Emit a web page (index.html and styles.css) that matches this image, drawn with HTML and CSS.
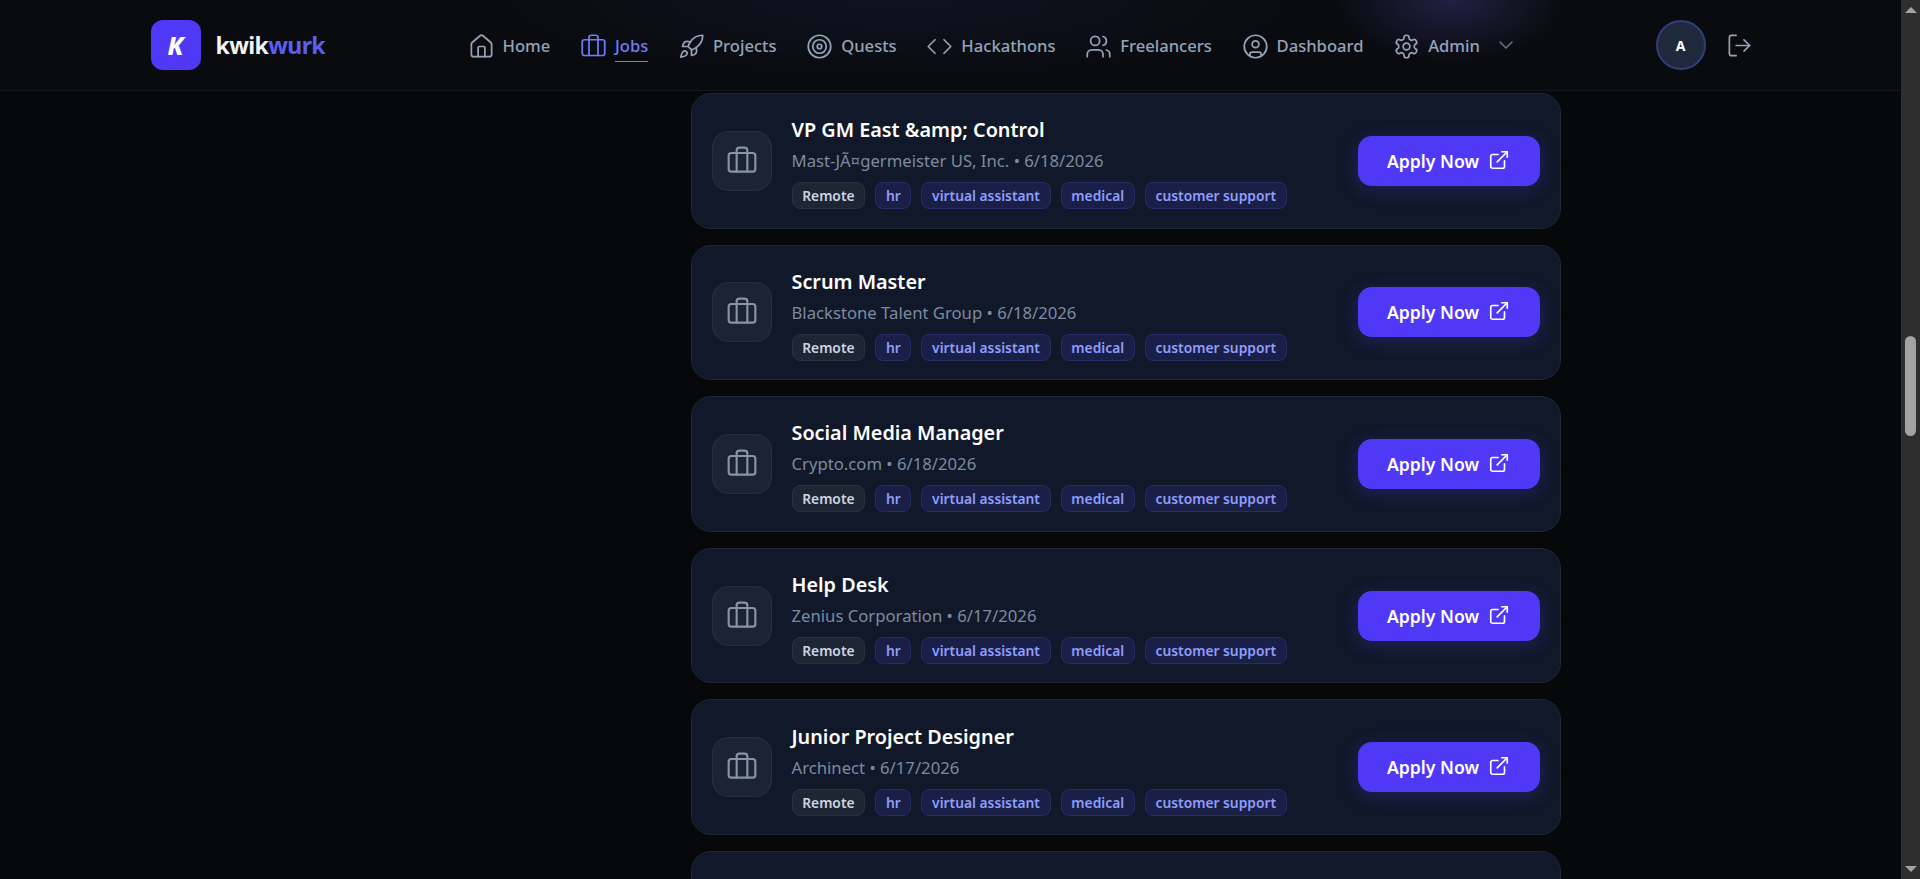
FILE: index.html
```html
<!DOCTYPE html>
<html lang="en">
<head>
    <meta charset="UTF-8">
    <title>kwikwurk - Jobs</title>
    <link rel="stylesheet" href="styles.css">
</head>
<body>
    <svg class="icon-defs" xmlns="http://www.w3.org/2000/svg">
        <symbol id="i-home" viewBox="0 0 24 24"><path d="M15 21v-8a1 1 0 0 0-1-1h-4a1 1 0 0 0-1 1v8"/><path d="M3 10a2 2 0 0 1 .709-1.528l7-5.999a2 2 0 0 1 2.582 0l7 5.999A2 2 0 0 1 21 10v9a2 2 0 0 1-2 2H5a2 2 0 0 1-2-2z"/></symbol>
        <symbol id="i-briefcase" viewBox="0 0 24 24"><path d="M16 20V4a2 2 0 0 0-2-2h-4a2 2 0 0 0-2 2v16"/><rect width="20" height="14" x="2" y="6" rx="2"/></symbol>
        <symbol id="i-rocket" viewBox="0 0 24 24"><path d="M4.5 16.5c-1.5 1.26-2 5-2 5s3.74-.5 5-2c.71-.84.7-2.13-.09-2.91a2.18 2.18 0 0 0-2.91-.09z"/><path d="m12 15-3-3a22 22 0 0 1 2-3.95A12.88 12.88 0 0 1 22 2c0 2.72-.78 7.5-6 11a22.35 22.35 0 0 1-4 2z"/><path d="M9 12H4s.55-3.03 2-4c1.62-1.08 5 0 5 0"/><path d="M12 15v5s3.03-.55 4-2c1.08-1.62 0-5 0-5"/></symbol>
        <symbol id="i-target" viewBox="0 0 24 24"><circle cx="12" cy="12" r="10"/><circle cx="12" cy="12" r="6"/><circle cx="12" cy="12" r="2"/></symbol>
        <symbol id="i-code" viewBox="0 0 24 24"><polyline points="16 18 22 12 16 6"/><polyline points="8 6 2 12 8 18"/></symbol>
        <symbol id="i-users" viewBox="0 0 24 24"><path d="M16 21v-2a4 4 0 0 0-4-4H6a4 4 0 0 0-4 4v2"/><circle cx="9" cy="7" r="4"/><path d="M22 21v-2a4 4 0 0 0-3-3.87"/><path d="M16 3.13a4 4 0 0 1 0 7.75"/></symbol>
        <symbol id="i-user-circle" viewBox="0 0 24 24"><circle cx="12" cy="12" r="10"/><circle cx="12" cy="10" r="3"/><path d="M7 20.662V19a2 2 0 0 1 2-2h6a2 2 0 0 1 2 2v1.662"/></symbol>
        <symbol id="i-settings" viewBox="0 0 24 24"><path d="M12.22 2h-.44a2 2 0 0 0-2 2v.18a2 2 0 0 1-1 1.73l-.43.25a2 2 0 0 1-2 0l-.15-.08a2 2 0 0 0-2.73.73l-.22.38a2 2 0 0 0 .73 2.73l.15.1a2 2 0 0 1 1 1.72v.51a2 2 0 0 1-1 1.74l-.15.09a2 2 0 0 0-.73 2.73l.22.38a2 2 0 0 0 2.73.73l.15-.08a2 2 0 0 1 2 0l.43.25a2 2 0 0 1 1 1.73V20a2 2 0 0 0 2 2h.44a2 2 0 0 0 2-2v-.18a2 2 0 0 1 1-1.73l.43-.25a2 2 0 0 1 2 0l.15.08a2 2 0 0 0 2.73-.73l.22-.39a2 2 0 0 0-.73-2.73l-.15-.08a2 2 0 0 1-1-1.74v-.5a2 2 0 0 1 1-1.74l.15-.09a2 2 0 0 0 .73-2.73l-.22-.38a2 2 0 0 0-2.73-.73l-.15.08a2 2 0 0 1-2 0l-.43-.25a2 2 0 0 1-1-1.73V4a2 2 0 0 0-2-2z"/><circle cx="12" cy="12" r="3"/></symbol>
        <symbol id="i-chevron" viewBox="0 0 24 24"><path d="m6 9 6 6 6-6"/></symbol>
        <symbol id="i-logout" viewBox="0 0 24 24"><path d="M9 21H5a2 2 0 0 1-2-2V5a2 2 0 0 1 2-2h4"/><polyline points="16 17 21 12 16 7"/><line x1="21" y1="12" x2="9" y2="12"/></symbol>
        <symbol id="i-external" viewBox="0 0 24 24"><path d="M15 3h6v6"/><path d="M10 14 21 3"/><path d="M18 13v6a2 2 0 0 1-2 2H5a2 2 0 0 1-2-2V8a2 2 0 0 1 2-2h6"/></symbol>
    </svg>

    <div class="window">
        <div class="page">
            <header class="topbar">
                <div class="topbar-inner">
                    <a class="brand" href="#">
                        <span class="brand-mark">K</span>
                        <span class="brand-name">kwik<span class="brand-accent">wurk</span></span>
                    </a>
                    <nav class="nav">
                        <a class="nav-item" href="#"><svg class="icon"><use href="#i-home"/></svg><span class="nav-label">Home</span></a>
                        <a class="nav-item active" href="#"><svg class="icon"><use href="#i-briefcase"/></svg><span class="nav-label">Jobs</span></a>
                        <a class="nav-item" href="#"><svg class="icon"><use href="#i-rocket"/></svg><span class="nav-label">Projects</span></a>
                        <a class="nav-item" href="#"><svg class="icon"><use href="#i-target"/></svg><span class="nav-label">Quests</span></a>
                        <a class="nav-item" href="#"><svg class="icon"><use href="#i-code"/></svg><span class="nav-label">Hackathons</span></a>
                        <a class="nav-item" href="#"><svg class="icon"><use href="#i-users"/></svg><span class="nav-label">Freelancers</span></a>
                        <a class="nav-item" href="#"><svg class="icon"><use href="#i-user-circle"/></svg><span class="nav-label">Dashboard</span></a>
                        <a class="nav-item" href="#"><svg class="icon"><use href="#i-settings"/></svg><span class="nav-label">Admin</span><svg class="icon-chevron"><use href="#i-chevron"/></svg></a>
                    </nav>
                    <div class="account">
                        <span class="avatar">A</span>
                        <svg class="icon-logout"><use href="#i-logout"/></svg>
                    </div>
                </div>
            </header>

            <main class="feed">
                <article class="job-card">
                    <div class="job-icon"><svg><use href="#i-briefcase"/></svg></div>
                    <div class="job-body">
                        <h3 class="job-title">VP GM East &amp;amp; Control</h3>
                        <p class="job-meta">Mast-JÃ¤germeister US, Inc. • 6/18/2026</p>
                        <div class="tags">
                            <span class="tag tag-plain">Remote</span>
                            <span class="tag">hr</span>
                            <span class="tag">virtual assistant</span>
                            <span class="tag">medical</span>
                            <span class="tag">customer support</span>
                        </div>
                    </div>
                    <a class="btn-apply" href="#">Apply Now <svg><use href="#i-external"/></svg></a>
                </article>

                <article class="job-card">
                    <div class="job-icon"><svg><use href="#i-briefcase"/></svg></div>
                    <div class="job-body">
                        <h3 class="job-title">Scrum Master</h3>
                        <p class="job-meta">Blackstone Talent Group • 6/18/2026</p>
                        <div class="tags">
                            <span class="tag tag-plain">Remote</span>
                            <span class="tag">hr</span>
                            <span class="tag">virtual assistant</span>
                            <span class="tag">medical</span>
                            <span class="tag">customer support</span>
                        </div>
                    </div>
                    <a class="btn-apply" href="#">Apply Now <svg><use href="#i-external"/></svg></a>
                </article>

                <article class="job-card">
                    <div class="job-icon"><svg><use href="#i-briefcase"/></svg></div>
                    <div class="job-body">
                        <h3 class="job-title">Social Media Manager</h3>
                        <p class="job-meta">Crypto.com • 6/18/2026</p>
                        <div class="tags">
                            <span class="tag tag-plain">Remote</span>
                            <span class="tag">hr</span>
                            <span class="tag">virtual assistant</span>
                            <span class="tag">medical</span>
                            <span class="tag">customer support</span>
                        </div>
                    </div>
                    <a class="btn-apply" href="#">Apply Now <svg><use href="#i-external"/></svg></a>
                </article>

                <article class="job-card">
                    <div class="job-icon"><svg><use href="#i-briefcase"/></svg></div>
                    <div class="job-body">
                        <h3 class="job-title">Help Desk</h3>
                        <p class="job-meta">Zenius Corporation • 6/17/2026</p>
                        <div class="tags">
                            <span class="tag tag-plain">Remote</span>
                            <span class="tag">hr</span>
                            <span class="tag">virtual assistant</span>
                            <span class="tag">medical</span>
                            <span class="tag">customer support</span>
                        </div>
                    </div>
                    <a class="btn-apply" href="#">Apply Now <svg><use href="#i-external"/></svg></a>
                </article>

                <article class="job-card">
                    <div class="job-icon"><svg><use href="#i-briefcase"/></svg></div>
                    <div class="job-body">
                        <h3 class="job-title">Junior Project Designer</h3>
                        <p class="job-meta">Archinect • 6/17/2026</p>
                        <div class="tags">
                            <span class="tag tag-plain">Remote</span>
                            <span class="tag">hr</span>
                            <span class="tag">virtual assistant</span>
                            <span class="tag">medical</span>
                            <span class="tag">customer support</span>
                        </div>
                    </div>
                    <a class="btn-apply" href="#">Apply Now <svg><use href="#i-external"/></svg></a>
                </article>

                <article class="job-card"></article>
            </main>
        </div>

        <div class="scrollbar">
            <span class="scroll-arrow scroll-up"></span>
            <div class="scroll-track"><span class="scroll-thumb"></span></div>
            <span class="scroll-arrow scroll-down"></span>
        </div>
    </div>
</body>
</html>
```

FILE: styles.css
```css
* {
    box-sizing: border-box;
}
html, body {
    height: 100%;
    margin: 0;
}
body {
    font-family: "Noto Sans", Arial, sans-serif;
    background-color: #07080a;
    color: #fff;
    overflow: hidden;
}
a {
    color: inherit;
    text-decoration: none;
}
.icon-defs {
    display: none;
}
svg {
    fill: none;
    stroke: currentColor;
    stroke-width: 2;
    stroke-linecap: round;
    stroke-linejoin: round;
}
.window {
    display: flex;
    height: 100vh;
}
.page {
    flex: 1;
    min-width: 0;
    overflow: hidden;
}

/* top bar */
.topbar {
    height: 91px;
    border-bottom: 1px solid #16171b;
    background-color: #0a0b0f;
    background-image:
        radial-gradient(ellipse 115px 62px at 1450px 0, #231f42 0%, rgba(35, 31, 66, 0) 100%),
        radial-gradient(ellipse 420px 80px at 900px 0, #0d1320 0%, rgba(13, 19, 32, 0) 100%);
}
.topbar-inner {
    width: 1600px;
    height: 90px;
    margin: 0 auto;
    display: flex;
    align-items: center;
    justify-content: space-between;
}
.brand {
    display: flex;
    align-items: center;
    gap: 15px;
}
.brand-mark {
    width: 50px;
    height: 50px;
    border-radius: 12px;
    background-color: #4f39f6;
    display: flex;
    align-items: center;
    justify-content: center;
    font-size: 25px;
    font-weight: 800;
    font-style: italic;
}
.brand-name {
    font-size: 23px;
    font-weight: 700;
    letter-spacing: -0.6px;
    color: #f1f5f9;
}
.brand-accent {
    color: #5a5ff0;
}
.nav {
    display: flex;
    align-items: center;
    gap: 29.7px;
    margin: 2px 0 0 5px;
}
.nav-item {
    display: flex;
    align-items: center;
    gap: 8px;
    color: #94a3b8;
    font-size: 16.6px;
    font-weight: 500;
}
.nav-item .icon {
    width: 27px;
    height: 27px;
    stroke-width: 1.55;
}
.nav-label {
    padding: 4px 0;
    border-bottom: 1px solid transparent;
}
.nav-item.active {
    color: #6f7cf6;
}
.nav-item.active .nav-label {
    border-bottom-color: #6f7cf6;
}
.icon-chevron {
    width: 24px;
    height: 24px;
    margin-left: 6px;
    margin-top: -3px;
    stroke-width: 1.5;
    color: #64748b;
}
.account {
    display: flex;
    align-items: center;
    gap: 20px;
}
.avatar {
    width: 50px;
    height: 50px;
    border-radius: 50%;
    border: 2px solid #323c7c;
    background-color: #1e293b;
    display: flex;
    align-items: center;
    justify-content: center;
    font-size: 14px;
    font-weight: 700;
}
.icon-logout {
    width: 27px;
    height: 27px;
    margin-right: -2px;
    stroke-width: 1.5;
    color: #94a3b8;
}

/* job list */
.feed {
    width: 1600px;
    margin: 2px auto 0;
    padding-left: 540px;
}
.job-card {
    width: 870px;
    height: 135.6px;
    margin-bottom: 16px;
    padding: 0 20px;
    display: flex;
    align-items: center;
    gap: 20px;
    background-color: #111829;
    border: 1px solid #1e2638;
    border-radius: 20px;
}
.job-icon {
    width: 60px;
    height: 60px;
    flex-shrink: 0;
    border-radius: 16px;
    background-color: #1c2433;
    border: 1px solid #273042;
    display: flex;
    align-items: center;
    justify-content: center;
    color: #8693a9;
}
.job-icon svg {
    width: 32px;
    height: 32px;
    stroke-width: 1.6;
}
.job-body {
    flex: 1;
    min-width: 0;
    padding-top: 4px;
}
.job-title {
    margin: 0;
    font-size: 19.8px;
    line-height: 28px;
    font-weight: 600;
    color: #fff;
}
.job-meta {
    margin: 5px 0 9px;
    font-size: 16.7px;
    line-height: 24px;
    color: #7d8aa0;
}
.tags {
    display: flex;
    gap: 10px;
}
.tag {
    height: 27px;
    padding: 0 9.7px;
    display: flex;
    align-items: center;
    font-size: 13.8px;
    font-weight: 600;
    color: #8f9dfb;
    background-color: #1a1f47;
    border: 1px solid #272d63;
    border-radius: 8px;
}
.tag-plain {
    color: #cbd5e1;
    background-color: #1e2533;
    border-color: #293141;
}
.btn-apply {
    width: 182px;
    height: 50px;
    flex-shrink: 0;
    display: flex;
    align-items: center;
    justify-content: center;
    gap: 9px;
    background-color: #4f39f6;
    border-radius: 14px;
    font-size: 17.6px;
    font-weight: 600;
    color: #fff;
    box-shadow: 0 4px 20px rgba(79, 57, 246, 0.25);
}
.btn-apply svg {
    width: 22px;
    height: 22px;
    stroke-width: 1.8;
    margin-top: -2px;
}

/* browser scrollbar */
.scrollbar {
    width: 19px;
    flex-shrink: 0;
    display: flex;
    flex-direction: column;
    align-items: center;
    background-color: #2e2e2e;
}
.scroll-arrow {
    flex-shrink: 0;
    width: 0;
    height: 0;
    margin: 7px 0;
    border-left: 6px solid transparent;
    border-right: 6px solid transparent;
}
.scroll-up {
    border-bottom: 6px solid #a3a3a3;
}
.scroll-down {
    border-top: 6px solid #a3a3a3;
}
.scroll-track {
    flex: 1;
    width: 100%;
    padding-top: 316px;
    display: flex;
    justify-content: center;
}
.scroll-thumb {
    width: 11px;
    height: 100px;
    border-radius: 6px;
    background-color: #a3a3a3;
}
```
